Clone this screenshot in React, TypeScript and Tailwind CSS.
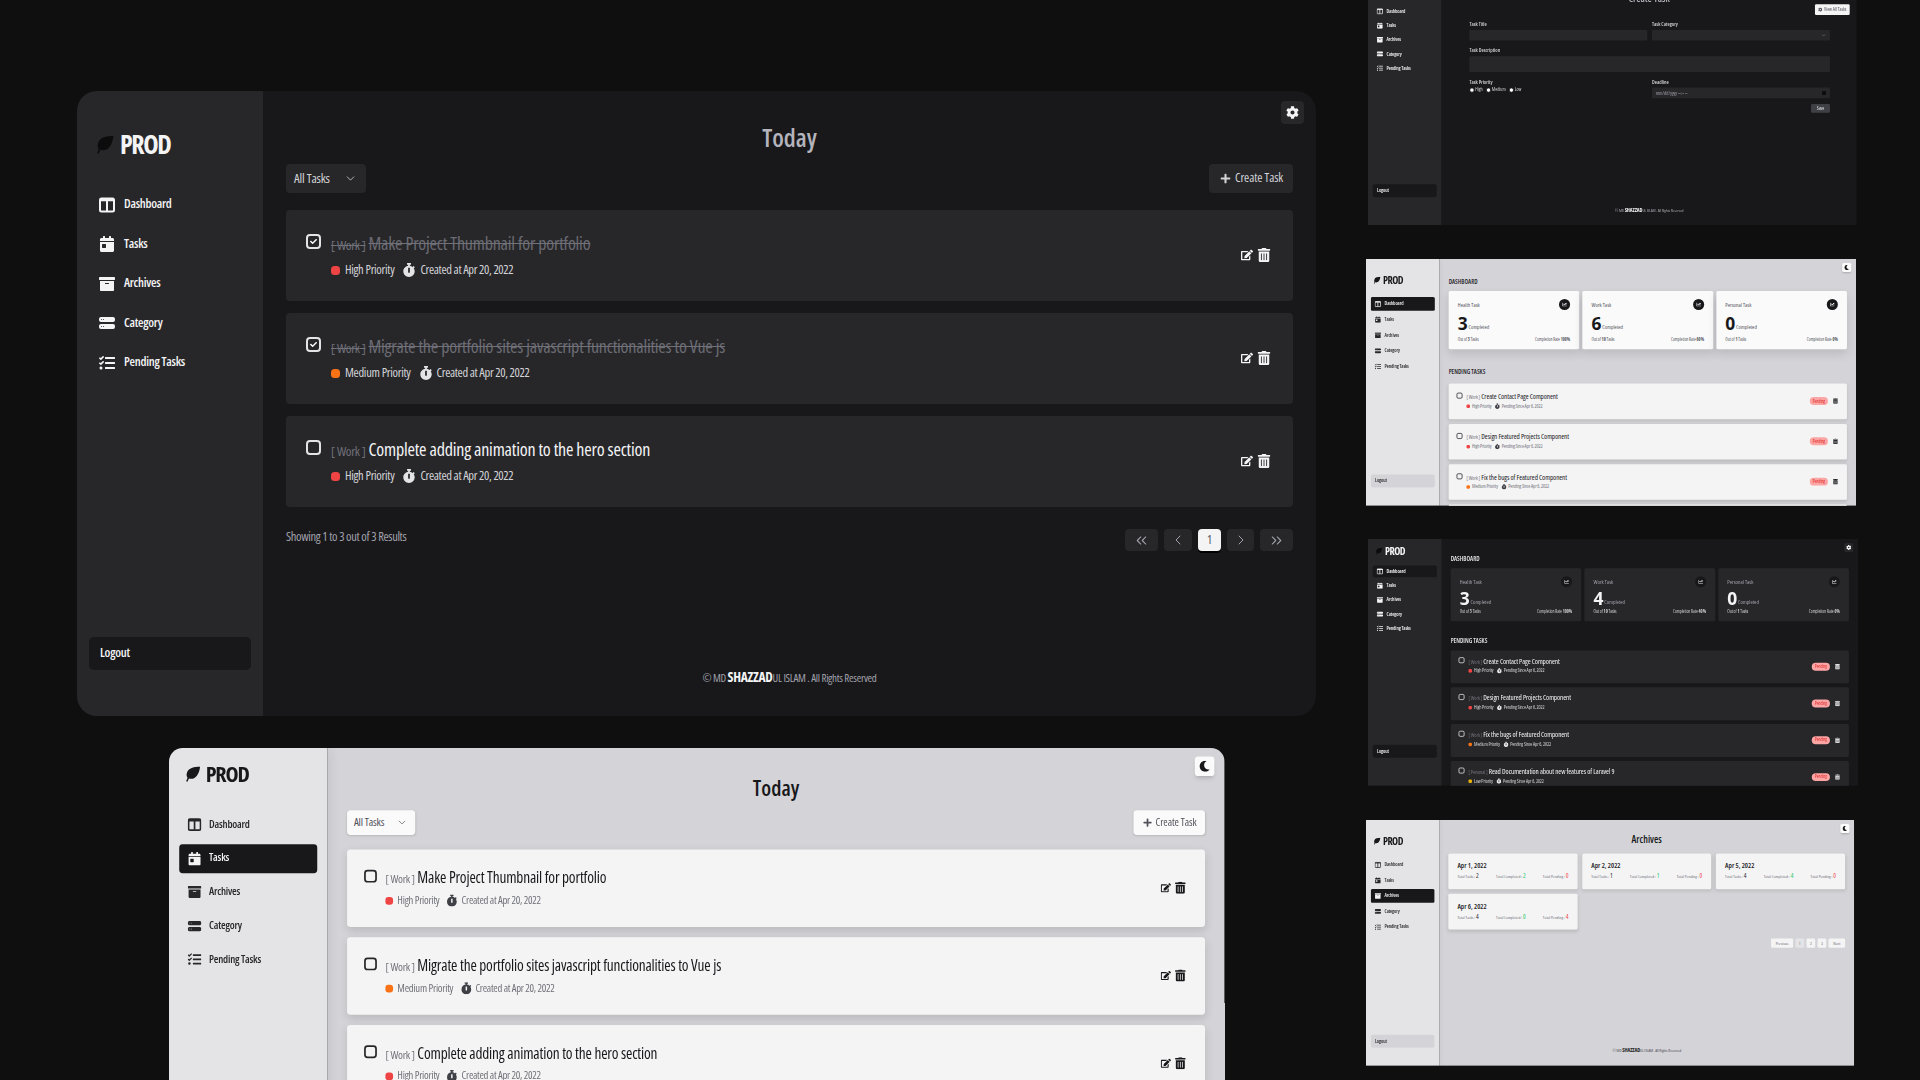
import { ReactNode } from "react";
import { FaCalendarDay, FaArchive, FaTasks, FaStopwatch, FaEdit, FaTrashAlt, FaMoon, FaCog, FaPlus, FaChartLine, FaCheck } from "react-icons/fa";
import { BsHddStackFill } from "react-icons/bs";
import { ChevronDown, ChevronLeft, ChevronRight, ChevronsLeft, ChevronsRight } from "lucide-react";

type Mode = "dark" | "light";
const T = {
  dark: {
    side: "bg-[#27272a] text-[#f4f4f5]",
    main: "bg-[#18181b] text-[#e4e4e7]",
    leaf: "text-[#0c0c0d]",
    logo: "text-[#f4f4f5]",
    active: "bg-[#18181b] text-white",
    logout: "bg-[#18181b] text-[#f4f4f5]",
    round: "bg-[#27272a] text-[#f4f4f5]",
    select: "bg-[#27272a] text-[#d4d4d8]",
    card: "bg-[#27272a]",
    title: "text-[#f4f4f5]",
    tag: "text-[#71717a]",
    meta: "text-[#d4d4d8]",
    metaIcon: "text-[#e4e4e7]",
    icon: "text-[#f4f4f5]",
    box: "border-[#e4e4e7] text-white",
    heading: "text-[#b4b4bc]",
    section: "text-[#e4e4e7]",
    foot: "text-[#a1a1aa]",
    footB: "text-[#f4f4f5]",
    stat: "bg-[#27272a]",
    statLabel: "text-[#a1a1aa]",
    statNum: "text-[#f4f4f5]",
    statDisc: "bg-[#18181b] text-[#e4e4e7]",
    statFoot: "text-[#d4d4d8]",
    pageBtn: "bg-[#27272a] text-[#a1a1aa]",
    pageOn: "bg-[#f4f4f5] text-[#52525b] shadow-[0_2px_0_#000]",
  },
  light: {
    side: "bg-[#e4e4e7] text-[#27272a] shadow-[4px_0_12px_rgba(0,0,0,0.06)]",
    main: "bg-[#d4d4d8] text-[#27272a]",
    leaf: "text-[#18181b]",
    logo: "text-[#18181b]",
    active: "bg-[#18181b] text-[#f4f4f5]",
    logout: "bg-[#d4d4d8] text-[#27272a]",
    round: "bg-[#fafafa] text-[#18181b] shadow-md",
    select: "bg-[#fafafa] text-[#52525b] shadow-sm",
    card: "bg-[#f4f4f5] shadow-[0_4px_10px_rgba(0,0,0,0.12)]",
    title: "text-[#18181b]",
    tag: "text-[#71717a]",
    meta: "text-[#71717a]",
    metaIcon: "text-[#3f3f46]",
    icon: "text-[#18181b]",
    box: "border-[#27272a] text-[#27272a]",
    heading: "text-[#18181b]",
    section: "text-[#27272a]",
    foot: "text-[#52525b]",
    footB: "text-[#18181b]",
    stat: "bg-[#fafafa] shadow-[0_12px_24px_rgba(0,0,0,0.12)]",
    statLabel: "text-[#52525b]",
    statNum: "text-[#18181b]",
    statDisc: "bg-[#18181b] text-white",
    statFoot: "text-[#52525b]",
    pageBtn: "bg-[#f4f4f5] text-[#52525b]",
    pageOn: "bg-[#e4e4e7] text-[#71717a]",
  },
};

type Side = { logo: string; nav: string; row: string; logout: string };
const SIDE_A: Side = { logo: "mt-[33px] h-[40px]", nav: "mt-[23px] gap-[4.5px]", row: "h-[35px]", logout: "mb-[46px]" };
const SIDE_B: Side = { logo: "mt-[10px] h-[40px]", nav: "mt-[23px] gap-[5.5px]", row: "h-[34px]", logout: "mb-[46px]" };
const SIDE_D: Side = { logo: "mt-[10px] h-[40px]", nav: "mt-[17px] gap-[6px]", row: "h-[30px]", logout: "mb-[71px]" };

function ColumnsIcon() {
  return (
    <svg width="16" height="16" viewBox="0 0 16 16" fill="none" stroke="currentColor" strokeWidth="2" className="shrink-0">
      <rect x="1" y="1.5" width="14" height="13" rx="1.5" />
      <path d="M8 2v12" />
      <path d="M1 3h14" strokeWidth="2.4" />
    </svg>
  );
}

function Leaf({ cls }: { cls: string }) {
  return (
    <svg width="19" height="19" viewBox="0 0 20 20" fill="currentColor" className={`shrink-0 ${cls}`}>
      <path d="M19.5 1C12 1.2 5.2 2 3.2 8.6c-.8 2.7-.3 4.8.8 6.2L2.2 19l1.6.7 1.9-4.1C11.600 17.400 17.800 13.500 19.500 1Z" />
    </svg>
  );
}

const NAV: [string, ReactNode][] = [
  ["Dashboard", <ColumnsIcon />],
  ["Tasks", <FaCalendarDay size={16} />],
  ["Archives", <FaArchive size={16} />],
  ["Category", <BsHddStackFill size={16} />],
  ["Pending Tasks", <FaTasks size={16} />],
];

function Sidebar({ mode, active, side }: { mode: Mode; active?: string; side: Side }) {
  const t = T[mode];
  return (
    <aside className={`relative z-10 flex h-full w-[186px] shrink-0 flex-col px-[12px] ${t.side}`}>
      <div className={`flex items-center gap-[6px] pl-[6px] ${side.logo}`}>
        <Leaf cls={t.leaf} />
        <span className={`text-[26px] leading-none font-bold tracking-[-1.4px] ${t.logo}`}>PROD</span>
      </div>
      <nav className={`flex flex-col ${side.nav}`}>
        {NAV.map(([name, icon]) => (
          <div
            key={name}
            className={`flex items-center gap-[9px] rounded-[4px] pl-[10px] text-[12.5px] font-semibold tracking-[-0.25px] ${side.row} ${active === name ? t.active : ""}`}
          >
            {icon}
            <span>{name}</span>
          </div>
        ))}
      </nav>
      <div className={`mt-auto flex h-[33px] items-center rounded-[5px] pl-[11px] text-[12.5px] font-semibold tracking-[-0.25px] ${side.logout} ${t.logout}`}>
        Logout
      </div>
    </aside>
  );
}

function Checkbox({ mode, checked }: { mode: Mode; checked?: boolean }) {
  return (
    <span className={`flex h-[15px] w-[15px] shrink-0 items-center justify-center rounded-[4px] border-2 ${T[mode].box}`}>
      {checked && <FaCheck size={7} />}
    </span>
  );
}

function Dot({ color }: { color: string }) {
  return <span className={`h-[9px] w-[9px] shrink-0 rounded-[3.5px] ${color}`} />;
}

type TaskProps = {
  mode: Mode; tag: string; title: string; dot: string; priority: string; stamp: string;
  done?: boolean; pending?: boolean; cardH: string; top: string; metaGap: string;
};

function TaskCard({ mode, tag, title, dot, priority, stamp, done, pending, cardH, top, metaGap }: TaskProps) {
  const t = T[mode];
  return (
    <div className={`flex shrink-0 items-center justify-between rounded-[4px] pr-[22px] pl-[20px] ${cardH} ${t.card}`}>
      <div className={`flex h-full gap-[10px] ${top}`}>
        <div className="pt-[1px]"><Checkbox mode={mode} checked={done} /></div>
        <div className={`flex flex-col ${metaGap}`}>
          <div className={`flex items-baseline gap-[3px] whitespace-nowrap ${done ? "text-[#71717a] line-through" : ""}`}>
            <span className={`text-[13px] leading-[20px] tracking-[-0.3px] ${t.tag}`}>[ {tag} ]</span>
            <span className={`text-[18px] leading-[20px] tracking-[-0.2px] ${done ? "text-[#6b6b73]" : t.title}`}>{title}</span>
          </div>
          <div className={`flex items-center whitespace-nowrap text-[12.5px] leading-[16px] ${t.meta}`}>
            <Dot color={dot} />
            <span className="ml-[5px] tracking-[-0.3px]">{priority}</span>
            <FaStopwatch size={14} className={`ml-[8px] ${t.metaIcon}`} />
            <span className="ml-[4px] tracking-[-0.35px]">{stamp}</span>
          </div>
        </div>
      </div>
      <div className={`mb-[2px] flex items-center gap-[4px] ${t.icon}`}>
        {pending && (
          <span className="mr-[8px] flex h-[20px] w-[46px] items-center justify-center rounded-full bg-[#fca5a5] text-[11px] text-[#dc2626]">Pending</span>
        )}
        {!pending && <FaEdit size={12} />}
        <FaTrashAlt size={14} />
      </div>
    </div>
  );
}

function Toggle({ mode }: { mode: Mode }) {
  return (
    <div className={`absolute top-[10px] right-[12px] flex h-[23px] w-[23px] items-center justify-center rounded-[4px] ${T[mode].round}`}>
      {mode === "dark" ? <FaCog size={13} /> : <FaMoon size={13} />}
    </div>
  );
}

function Footer({ mode, cls }: { mode: Mode; cls: string }) {
  const t = T[mode];
  return (
    <div className={`absolute left-0 w-full text-center text-[11px] leading-[18px] tracking-[-0.3px] whitespace-nowrap ${cls} ${t.foot}`}>
      © MD <span className={`text-[13.5px] font-bold ${t.footB}`}>SHAZZAD</span>UL ISLAM . All Rights Reserved
    </div>
  );
}

function Heading({ mode, children }: { mode: Mode; children: ReactNode }) {
  return (
    <h1 className={`flex h-[38px] items-center justify-center text-[25px] leading-none font-semibold ${T[mode].heading}`}>{children}</h1>
  );
}

const TODAY = [
  { title: "Make Project Thumbnail for portfolio", dot: "bg-[#ef4444]", priority: "High Priority" },
  { title: "Migrate the portfolio sites javascript functionalities to Vue js", dot: "bg-[#f97316]", priority: "Medium Priority" },
  { title: "Complete adding animation to the hero section", dot: "bg-[#ef4444]", priority: "High Priority" },
];

function TodayPage({ mode, strike }: { mode: Mode; strike?: boolean }) {
  const t = T[mode];
  return (
    <>
      <div className="pt-[27px]"><Heading mode={mode}>Today</Heading></div>
      <div className="mt-[8px] flex items-center justify-between text-[13px]">
        <div className={`flex h-[29px] w-[80px] items-center justify-between rounded-[4px] pr-[9px] pl-[8px] ${t.select}`}>
          <span className="tracking-[-0.2px]">All Tasks</span><ChevronDown size={13} strokeWidth={1.5} />
        </div>
        <div className={`flex h-[29px] w-[84px] items-center gap-[4px] rounded-[4px] pl-[11px] ${t.select}`}>
          <FaPlus size={11} /><span className="text-[12.5px] tracking-[-0.1px]">Create Task</span>
        </div>
      </div>
      <div className="mt-[17px] flex flex-col gap-[12px]">
        {TODAY.map((x, i) => (
          <TaskCard key={x.title} mode={mode} tag="Work" title={x.title} dot={x.dot} priority={x.priority} stamp="Created at Apr 20, 2022"
            done={strike && i < 2} cardH="h-[91px]" top="pt-[23px]" metaGap="gap-[7px]" />
        ))}
      </div>
      <div className="mt-[22px] flex items-start justify-between">
        <span className={`text-[12.5px] leading-[16px] tracking-[-0.35px] ${t.foot}`}>Showing 1 to 3 out of 3 Results</span>
        <div className="flex gap-[6px]">
          <span className={`flex h-[22px] w-[33px] items-center justify-center rounded-[4px] ${t.pageBtn}`}><ChevronsLeft size={17} strokeWidth={1.5} /></span>
          <span className={`flex h-[22px] w-[28px] items-center justify-center rounded-[4px] ${t.pageBtn}`}><ChevronLeft size={16} strokeWidth={1.5} /></span>
          <span className={`flex h-[22px] w-[23px] items-center justify-center rounded-[4px] text-[12px] ${t.pageOn}`}>1</span>
          <span className={`flex h-[22px] w-[27px] items-center justify-center rounded-[4px] ${t.pageBtn}`}><ChevronRight size={16} strokeWidth={1.5} /></span>
          <span className={`flex h-[22px] w-[33px] items-center justify-center rounded-[4px] ${t.pageBtn}`}><ChevronsRight size={17} strokeWidth={1.5} /></span>
        </div>
      </div>
      <Footer mode={mode} cls="top-[577px]" />
    </>
  );
}

const PENDING = [
  { tag: "Work", title: "Create Contact Page Component", dot: "bg-[#ef4444]", priority: "High Priority" },
  { tag: "Work", title: "Design Featured Projects Component", dot: "bg-[#ef4444]", priority: "High Priority" },
  { tag: "Work", title: "Fix the bugs of Featured Component", dot: "bg-[#f97316]", priority: "Medium Priority" },
  { tag: "Personal", title: "Read Documentation about new features of Laravel 9", dot: "bg-[#eab308]", priority: "Low Priority" },
];

function Stat({ mode, name, n, total, rate, h }: { mode: Mode; name: string; n: number; total: number; rate: string; h: string }) {
  const t = T[mode];
  return (
    <div className={`flex flex-col justify-between rounded-[4px] px-[23px] pt-[20px] pb-[17px] ${h} ${t.stat}`}>
      <div className="flex items-center justify-between">
        <span className={`text-[14px] ${t.statLabel}`}>{name}</span>
        <span className={`flex h-[28px] w-[28px] items-center justify-center rounded-full ${t.statDisc}`}><FaChartLine size={12} /></span>
      </div>
      <div className="flex items-end gap-[2px]">
        <span className={`text-[44px] leading-[40px] font-bold [font-stretch:88%] ${t.statNum}`}>{n}</span>
        <span className={`text-[14px] leading-[20px] ${t.statLabel}`}>Completed</span>
      </div>
      <div className={`flex justify-between text-[11px] leading-[14px] ${t.statFoot}`}>
        <span>Out of <b>{total}</b> Tasks</span>
        <span>Completion Rate <b>{rate}</b></span>
      </div>
    </div>
  );
}

function DashPage({ mode, work }: { mode: Mode; work: [number, string] }) {
  const t = T[mode];
  const light = mode === "light";
  return (
    <>
      <h2 className={`flex h-[20px] items-center text-[16px] font-semibold ${light ? "mt-[46px]" : "mt-[40px]"} ${t.section}`}>DASHBOARD</h2>
      <div className={`grid grid-cols-3 gap-[8px] ${light ? "mt-[15px]" : "mt-[14px]"}`}>
        <Stat mode={mode} name="Health Task" n={3} total={3} rate="100%" h={light ? "h-[147px]" : "h-[134px]"} />
        <Stat mode={mode} name="Work Task" n={work[0]} total={10} rate={work[1]} h={light ? "h-[147px]" : "h-[134px]"} />
        <Stat mode={mode} name="Personal Task" n={0} total={1} rate="0%" h={light ? "h-[147px]" : "h-[134px]"} />
      </div>
      <h2 className={`flex h-[20px] items-center text-[16px] font-semibold ${light ? "mt-[46px]" : "mt-[39px]"} ${t.section}`}>PENDING TASKS</h2>
      <div className={`flex flex-col ${light ? "mt-[21px] gap-[12px]" : "mt-[15px] gap-[10px]"}`}>
        {PENDING.map((x) => (
          <TaskCard key={x.title} mode={mode} tag={x.tag} title={x.title} dot={x.dot} priority={x.priority} stamp="Pending Since Apr 6, 2022"
            pending cardH={light ? "h-[90px]" : "h-[83px]"} top={light ? "pt-[22px]" : "pt-[16px]"} metaGap="gap-[5px]" />
        ))}
      </div>
    </>
  );
}

const ARCH = [
  { d: "Apr 1, 2022", a: 2, b: 2, c: 0 },
  { d: "Apr 2, 2022", a: 1, b: 1, c: 0 },
  { d: "Apr 5, 2022", a: 4, b: 4, c: 0 },
  { d: "Apr 6, 2022", a: 4, b: 0, c: 4 },
];

function ArchivePage({ mode }: { mode: Mode }) {
  const t = T[mode];
  return (
    <>
      <div className="pt-[29px]"><Heading mode={mode}>Archives</Heading></div>
      <div className="mt-[18px] grid grid-cols-3 gap-x-[12px] gap-y-[11px]">
        {ARCH.map((x) => (
          <div key={x.d} className={`flex h-[91px] flex-col rounded-[4px] px-[23px] pt-[20px] ${t.card}`}>
            <span className="text-[18px] leading-[22px] font-semibold text-[#18181b]">{x.d}</span>
            <div className="mt-[6px] flex items-center justify-between text-[11px] leading-[18px] text-[#71717a]">
              <span>Total Tasks : <span className="text-[16px] text-[#27272a]">{x.a}</span></span>
              <span>Total Completed : <span className="text-[16px] text-[#22c55e]">{x.b}</span></span>
              <span>Total Pending : <span className="text-[16px] text-[#ef4444]">{x.c}</span></span>
            </div>
          </div>
        ))}
      </div>
      <div className="mt-[23px] flex justify-end gap-[6px] text-[11px]">
        <span className="flex h-[23px] w-[56px] items-center justify-center rounded-[3px] bg-[#f4f4f5] text-[#71717a]">Previous</span>
        <span className="flex h-[23px] w-[22px] items-center justify-center rounded-[3px] bg-[#e4e4e7] text-[#71717a]">1</span>
        <span className="flex h-[23px] w-[22px] items-center justify-center rounded-[3px] bg-[#f4f4f5] text-[#71717a]">2</span>
        <span className="flex h-[23px] w-[22px] items-center justify-center rounded-[3px] bg-[#f4f4f5] text-[#71717a]">3</span>
        <span className="flex h-[23px] w-[42px] items-center justify-center rounded-[3px] bg-[#f4f4f5] text-[#71717a]">Next</span>
      </div>
      <Footer mode={mode} cls="top-[575px]" />
    </>
  );
}

function Field({ label, children, cls }: { label: string; children: ReactNode; cls?: string }) {
  return (
    <div className={`flex flex-col ${cls ?? ""}`}>
      <span className="text-[13px] leading-[16px] font-semibold text-[#d4d4d8]">{label}</span>
      {children}
    </div>
  );
}

function Radio({ label }: { label: string }) {
  return (
    <span className="flex items-center gap-[2px] text-[12px] leading-[14px] text-[#d4d4d8]">
      <span className="h-[13px] w-[13px] rounded-full border-[2px] border-[#18181b] bg-white" />{label}
    </span>
  );
}

function FormPage() {
  const input = "mt-[6px] flex h-[27px] items-center justify-between rounded-[3px] bg-[#27272a] px-[10px] text-[#a1a1aa]";
  return (
    <>
      <div className="pt-[29px]"><Heading mode="dark">Create Task</Heading></div>
      <div className="absolute top-[64px] right-[18px] flex h-[27px] w-[88px] items-center justify-center gap-[4px] rounded-[3px] bg-[#f4f4f5] text-[12px] text-[#52525b]">
        <FaCog size={11} />View All Tasks
      </div>
      <div className="mt-[40px] ml-[48px] mr-[45px] grid grid-cols-2 gap-x-[12px]">
        <Field label="Task Title"><div className={input} /></Field>
        <Field label="Task Category"><div className={input}><span /><ChevronDown size={12} /></div></Field>
        <Field label="Task Description" cls="col-span-2 mt-[17px]"><div className="mt-[7px] h-[40px] rounded-[3px] bg-[#27272a]" /></Field>
        <Field label="Task Priority" cls="mt-[17px]">
          <div className="mt-[5px] flex gap-[8px]"><Radio label="High" /><Radio label="Medium" /><Radio label="Low" /></div>
        </Field>
        <Field label="Deadline" cls="mt-[17px]">
          <div className={`${input} text-[12px]`}><span>mm/dd/yyyy --:-- --</span><span className="h-[10px] w-[10px] rounded-[2px] bg-[#0c0c0d]" /></div>
        </Field>
        <div className="col-span-2 mt-[15px] flex justify-end">
          <span className="flex h-[22px] w-[48px] items-center justify-center rounded-[3px] bg-[#3f3f46] text-[12px] text-[#e4e4e7]">Save</span>
        </div>
      </div>
      <Footer mode="dark" cls="top-[577px]" />
    </>
  );
}

function Frame({ mode, active, side, place, children }: { mode: Mode; active?: string; side: Side; place: string; children: ReactNode }) {
  const t = T[mode];
  return (
    <section className={`absolute flex h-[624px] w-[1239px] origin-top-left overflow-hidden ${place}`}>
      <Sidebar mode={mode} active={active} side={side} />
      <main className={`relative flex min-w-0 flex-1 flex-col px-[23px] ${t.main}`}>
        <Toggle mode={mode} />
        {children}
      </main>
    </section>
  );
}

export default function App() {
  return (
    <div className="relative h-[1080px] w-[1920px] overflow-hidden bg-[#0f0f10] [font-family:'Open_Sans',sans-serif] [font-stretch:75%]">
      <Frame mode="dark" side={SIDE_A} place="top-[91px] left-[77px] h-[625px] rounded-[20px]"><TodayPage mode="dark" strike /></Frame>
      <Frame mode="light" side={SIDE_B} active="Tasks" place="top-[748px] left-[168.5px] scale-[0.852] rounded-[16px]"><TodayPage mode="light" /></Frame>
      <Frame mode="dark" side={SIDE_D} place="top-[-21px] left-[1368px] scale-[0.3945] blur-[1.1px]"><FormPage /></Frame>
      <Frame mode="light" side={SIDE_A} active="Dashboard" place="top-[259px] left-[1366px] scale-[0.3955] blur-[1.1px]"><DashPage mode="light" work={[6, "60%"]} /></Frame>
      <Frame mode="dark" side={SIDE_D} active="Dashboard" place="top-[539px] left-[1368px] scale-[0.3955] blur-[1.1px]"><DashPage mode="dark" work={[4, "40%"]} /></Frame>
      <Frame mode="light" side={SIDE_A} active="Archives" place="top-[820px] left-[1366px] scale-[0.394] blur-[1.1px]"><ArchivePage mode="light" /></Frame>
    </div>
  );
}
